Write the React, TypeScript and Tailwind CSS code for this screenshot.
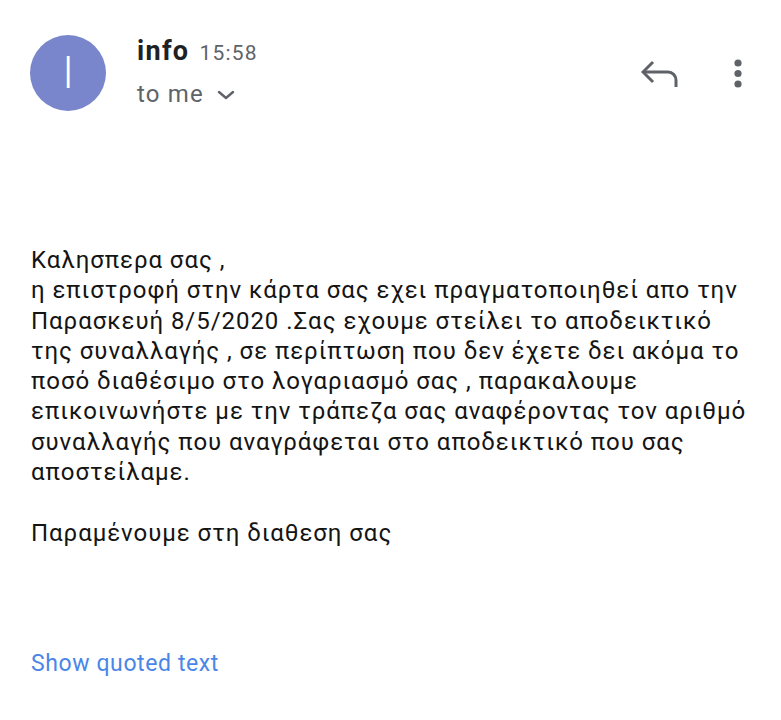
import React from "react";

export default function App() {
  return (
    <div className="w-[781px] h-[720px] bg-white overflow-hidden font-[family-name:Roboto,'Noto_Sans',sans-serif]">
      <div className="flex items-start justify-between pl-[30px] pr-[38px] pt-[35px]">
        <div className="flex items-start">
          <div className="w-[76px] h-[76px] rounded-full bg-[#7986cb] flex items-center justify-center text-white text-[44px] leading-none font-light">
            I
          </div>
          <div className="ml-[31px] mt-[1px] flex flex-col">
            <div className="flex items-baseline h-[30px] leading-[30px]">
              <span className="text-[27px] font-bold tracking-[1.3px] text-[#202124]">info</span>
              <span className="ml-[10px] text-[21px] tracking-[1.2px] text-[#5f6368]">15:58</span>
            </div>
            <div className="flex items-center mt-[13px] h-[30px] leading-[30px]">
              <span className="text-[24px] tracking-[1.2px] text-[#5f6368]">to me</span>
              <svg width="20" height="12" viewBox="0 0 20 12" className="ml-[12px] mt-[2px]">
                <path d="M3 3 L10 9 L17 3" fill="none" stroke="#5f6368" strokeWidth="2.4" strokeLinecap="round" strokeLinejoin="round" />
              </svg>
            </div>
          </div>
        </div>
        <div className="flex items-start mt-[24px]">
          <svg width="38" height="30" viewBox="0 0 38 30">
            <path d="M12 3 L2 13 L12 23" fill="none" stroke="#5f6368" strokeWidth="3" strokeLinejoin="miter" />
            <path d="M2 13 H27 A8 8 0 0 1 35 21 V28" fill="none" stroke="#5f6368" strokeWidth="3" />
          </svg>
          <svg width="10" height="30" viewBox="0 0 10 30" className="ml-[54px]">
            <circle cx="5" cy="4" r="3.6" fill="#5f6368" />
            <circle cx="5" cy="14.5" r="3.6" fill="#5f6368" />
            <circle cx="5" cy="25" r="3.6" fill="#5f6368" />
          </svg>
        </div>
      </div>
      <div className="pl-[31px] mt-[134px] text-[24px] tracking-[0.95px] leading-[30.3px] text-[#141414] whitespace-nowrap">
        Καλησπερα σας ,<br />
        η επιστροφή στην κάρτα σας εχει πραγματοποιηθεί απο την<br />
        Παρασκευή 8/5/2020 .Σας εχουμε στείλει το αποδεικτικό<br />
        της συναλλαγής , σε περίπτωση που δεν έχετε δει ακόμα το<br />
        ποσό διαθέσιμο στο λογαριασμό σας , παρακαλουμε<br />
        επικοινωνήστε με την τράπεζα σας αναφέροντας τον αριθμό<br />
        συναλλαγής που αναγράφεται στο αποδεικτικό που σας<br />
        αποστείλαμε.<br />
        <br />
        Παραμένουμε στη διαθεση σας
      </div>
      <div className="pl-[31px] mt-[101px] text-[23px] tracking-[0.6px] leading-[30px] text-[#4a86e8]">
        Show quoted text
      </div>
    </div>
  );
}
